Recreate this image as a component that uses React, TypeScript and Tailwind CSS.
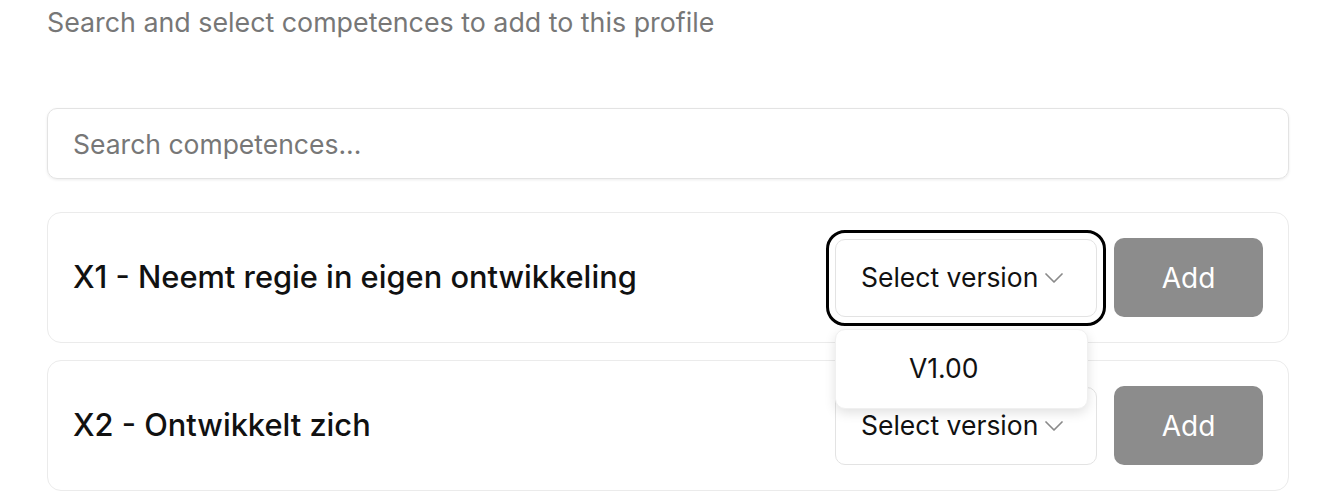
import { ChevronDown } from "lucide-react";

type Competence = {
  id: string;
  code: string;
  name: string;
  versions: string[];
};

const competences: Competence[] = [
  { id: "x1", code: "X1", name: "Neemt regie in eigen ontwikkeling", versions: ["V1.00"] },
  { id: "x2", code: "X2", name: "Ontwikkelt zich", versions: ["V1.00"] },
];

function VersionSelect({ open, versions }: { open: boolean; versions: string[] }) {
  return (
    <div className="relative">
      <button
        className={`flex items-center w-[262px] h-[78px] pl-[25px] bg-white border border-[#e3e3e3] rounded-[10px] text-[26.5px] text-[#111] ${
          open ? "outline-[3px] outline-solid outline-black outline-offset-[6px]" : ""
        }`}
      >
        <span>Select version</span>
        <ChevronDown className="w-[32px] h-[32px] text-[#8a8a8a]" strokeWidth={1.3} />
      </button>
      {open && (
        <div className="absolute left-0 top-[90px] z-10 w-[253px] h-[80px] pl-[73px] bg-white rounded-[10px] shadow-[0_4px_12px_rgba(0,0,0,0.12)] border border-[#f0f0f0] flex items-center">
          <span className="text-[26.5px] text-[#111]">{versions[0]}</span>
        </div>
      )}
    </div>
  );
}

export default function App() {
  return (
    <div
      className="w-[1324px] h-[498px] bg-white pl-[47px] pr-[35px] pt-[7px] overflow-hidden"
      style={{ fontFamily: "Inter, 'Noto Sans', sans-serif" }}
    >
      <p className="text-[26.8px] leading-[30px] text-[#777]">
        Search and select competences to add to this profile
      </p>

      <div className="mt-[71px]">
        <input
          className="w-full h-[71px] px-[25px] text-[26.5px] border border-[#e3e3e3] rounded-[10px] shadow-[0_1px_3px_rgba(0,0,0,0.08)] placeholder:text-[#777] outline-none"
          placeholder="Search competences..."
        />
      </div>

      <div className="mt-[33px] flex flex-col gap-[17px]">
        {competences.map((c, i) => (
          <div
            key={c.id}
            className="flex items-center justify-between h-[131px] px-[25px] border border-[#ebebeb] rounded-[14px] bg-white"
          >
            <h3 className="text-[30.8px] font-medium text-[#111]">
              {c.code} - {c.name}
            </h3>
            <div className="flex items-center gap-[17px]">
              <VersionSelect open={i === 0} versions={c.versions} />
              <button className="w-[149px] h-[79px] bg-[#8c8c8c] rounded-[10px] text-[28px] text-white">
                Add
              </button>
            </div>
          </div>
        ))}
      </div>
    </div>
  );
}
